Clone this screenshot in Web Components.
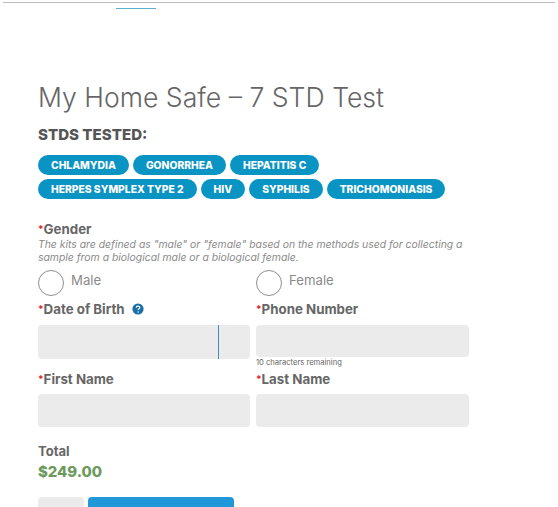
<!DOCTYPE html>
<html>
<head>
<meta charset="utf-8">
<style>
  html, body { margin: 0; height: 507px; overflow: hidden; background: #fff; }
  body { font-family: Inter, "Liberation Sans", sans-serif; color: #5f5f5f; }
</style>
</head>
<body>
<order-page>
  <test-chip>CHLAMYDIA</test-chip>
  <test-chip>GONORRHEA</test-chip>
  <test-chip>HEPATITIS C</test-chip>
  <test-chip>HERPES SYMPLEX TYPE 2</test-chip>
  <test-chip>HIV</test-chip>
  <test-chip>SYPHILIS</test-chip>
  <test-chip>TRICHOMONIASIS</test-chip>
</order-page>

<script>
class TestChip extends HTMLElement {
  connectedCallback() {
    const root = this.attachShadow({ mode: "open" });
    root.innerHTML = `
      <style>
        :host { display: block; height: 20px; padding: 0 13px; border-radius: 10px; background: #0a94c4;
          color: #fff; font-size: 10.3px; font-weight: 800; line-height: 20px; white-space: nowrap; }
      </style>
      <slot></slot>`;
  }
}

class FieldLabel extends HTMLElement {
  connectedCallback() {
    const root = this.attachShadow({ mode: "open" });
    root.innerHTML = `
      <style>
        :host { display: flex; align-items: center; height: 16px; font-size: 13.3px; font-weight: 700; color: #666; white-space: nowrap; }
        .req { color: #e0202c; font-size: 10px; }
        svg { margin-left: 7px; }
      </style>
      <span class="req">*</span><slot></slot>
      ${this.hasAttribute("help") ? `<svg width="12" height="12" viewBox="0 0 12 12">
        <circle cx="6" cy="6" r="5.6" fill="#1b6fa8"/>
        <path d="M4.2 4.6C4.3 3.6 5 3.1 6 3.1s1.8.6 1.8 1.5c0 .7-.4 1-1 1.4-.5.3-.7.6-.7 1.1" fill="none" stroke="#fff" stroke-width="1.2"/>
        <circle cx="6.1" cy="8.9" r=".75" fill="#fff"/>
      </svg>` : ""}`;
  }
}

class TextField extends HTMLElement {
  connectedCallback() {
    const root = this.attachShadow({ mode: "open" });
    const height = this.getAttribute("height") || 33;
    root.innerHTML = `
      <style>
        :host { display: block; position: relative; height: ${height}px; box-sizing: border-box; background: #ebebeb; border-radius: 4px; }
        .caret { position: absolute; top: 0; bottom: 0; left: 180px; width: 1px; background: #3f8fc0; }
      </style>
      ${this.hasAttribute("caret") ? `<div class="caret"></div>` : ""}`;
  }
}

class RadioOption extends HTMLElement {
  connectedCallback() {
    const root = this.attachShadow({ mode: "open" });
    root.innerHTML = `
      <style>
        :host { display: flex; gap: 7px; font-size: 13.2px; color: #8a8a8a; }
        .circle { width: 26px; height: 26px; box-sizing: border-box; border: 1px solid #8f8f8f; border-radius: 50%; }
        .text { line-height: 21px; }
      </style>
      <div class="circle"></div><div class="text"><slot></slot></div>`;
  }
}

class OrderPage extends HTMLElement {
  connectedCallback() {
    const root = this.attachShadow({ mode: "open" });
    root.innerHTML = `
      <style>
        :host { display: block; height: 507px; overflow: hidden; }
        .topline { height: 1px; margin: 2px 3px 0; background: #bdbdbd; }
        .tab { width: 40px; height: 1px; margin: 5px 0 0 116px; background: #5bb0d0; }
        .content { padding: 72px 0 0 38px; width: 431px; }
        h1 { margin: 0; height: 32px; font-size: 26.6px; font-weight: 300; line-height: 32px; color: #666; white-space: nowrap; }
        h2 { margin: 13px 0 0; height: 18px; font-size: 15.1px; font-weight: 800; line-height: 18px; color: #555; }
        .chips { display: flex; flex-direction: column; gap: 4px; margin-top: 11px; }
        .chip-row { display: flex; gap: 4px; }
        .gender { margin-top: 22px; }
        .note { margin: 1px 0 0; font-size: 10.4px; font-style: italic; line-height: 13px; color: #8a8a8a; white-space: nowrap; }
        .grid { display: grid; grid-template-columns: 212px 213px; column-gap: 6px; }
        .radios { margin-top: 6px; }
        .row-a { margin-top: 5px; }
        .row-a field-label { margin-bottom: 8px; }
        .row-b field-label { margin-bottom: 7px; }
        .row-b { margin-top: 3px; }
        .hint { margin-top: 1px; height: 10px; font-size: 7.6px; line-height: 10px; color: #666; }
        .total { margin-top: 16px; height: 16px; font-size: 13px; font-weight: 700; line-height: 16px; color: #666; }
        .price { margin-top: 3px; height: 21px; font-size: 14.9px; font-weight: 800; line-height: 21px; color: #6b9a5c; }
        .actions { display: flex; gap: 4px; margin-top: 14px; }
        .back { width: 46px; height: 30px; border-radius: 4px; background: #ebebeb; }
        .next { width: 146px; height: 30px; border-radius: 4px; background: #1f97d8; }
      </style>
      <div class="topline"></div>
      <div class="tab"></div>
      <div class="content">
        <h1>My Home Safe – 7 STD Test</h1>
        <h2>STDS TESTED:</h2>
        <div class="chips">
          <div class="chip-row"><slot name="r1"></slot></div>
          <div class="chip-row"><slot name="r2"></slot></div>
        </div>
        <div class="gender">
          <field-label>Gender</field-label>
          <p class="note">The kits are defined as "male" or "female" based on the methods used for collecting a<br>sample from a biological male or a biological female.</p>
        </div>
        <div class="grid radios">
          <radio-option>Male</radio-option>
          <radio-option>Female</radio-option>
        </div>
        <div class="grid row-a">
          <div>
            <field-label help>Date of Birth</field-label>
            <text-field height="34" caret></text-field>
          </div>
          <div>
            <field-label>Phone Number</field-label>
            <text-field height="32"></text-field>
            <div class="hint">10 characters remaining</div>
          </div>
        </div>
        <div class="grid row-b">
          <div>
            <field-label>First Name</field-label>
            <text-field></text-field>
          </div>
          <div>
            <field-label>Last Name</field-label>
            <text-field></text-field>
          </div>
        </div>
        <div class="total">Total</div>
        <div class="price">$249.00</div>
        <div class="actions"><div class="back"></div><div class="next"></div></div>
      </div>`;
    [...this.querySelectorAll("test-chip")].forEach((chip, i) => {
      chip.slot = i < 3 ? "r1" : "r2";
    });
  }
}

customElements.define("test-chip", TestChip);
customElements.define("field-label", FieldLabel);
customElements.define("text-field", TextField);
customElements.define("radio-option", RadioOption);
customElements.define("order-page", OrderPage);
</script>
</body>
</html>
